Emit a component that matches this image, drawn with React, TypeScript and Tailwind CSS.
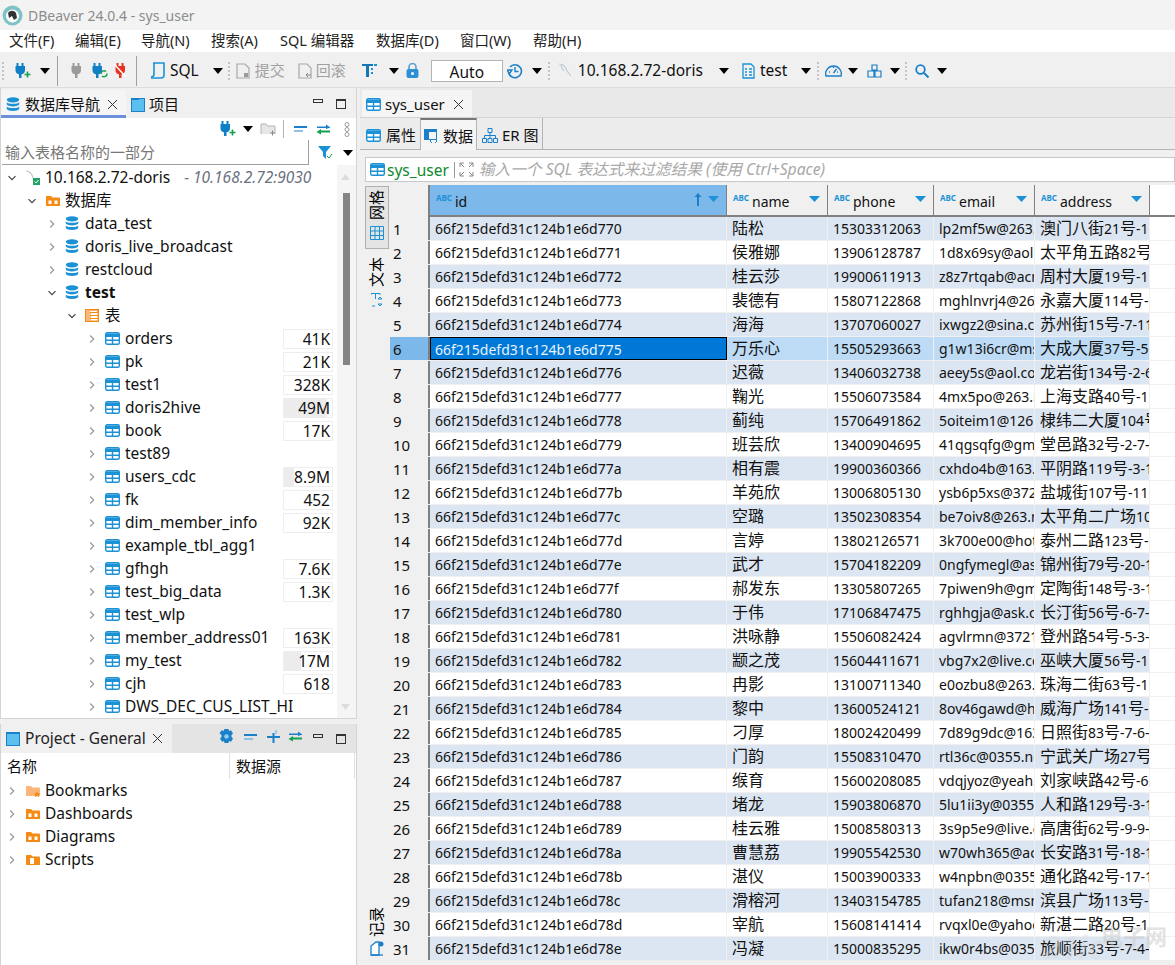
import React from "react";

const rows: string[][] = [
  ["陆松", "15303312063", "lp2mf5w@263.net", "澳门八街21号-1-11"],
  ["侯雅娜", "13906128787", "1d8x69sy@aol.com", "太平角五路82号-1"],
  ["桂云莎", "19900611913", "z8z7rtqab@acm.org", "周村大厦19号-11-2"],
  ["裴德有", "15807122868", "mghlnvrj4@263.net", "永嘉大厦114号-1-5"],
  ["海海", "13707060027", "ixwgz2@sina.com", "苏州街15号-7-11"],
  ["万乐心", "15505293663", "g1w13i6cr@msn.com", "大成大厦37号-5-1"],
  ["迟薇", "13406032738", "aeey5s@aol.com", "龙岩街134号-2-6"],
  ["鞠光", "15506073584", "4mx5po@263.net", "上海支路40号-11-1"],
  ["蓟纯", "15706491862", "5oiteim1@126.com", "棣纬二大厦104号-1"],
  ["班芸欣", "13400904695", "41qgsqfg@gmail.com", "堂邑路32号-2-7-1"],
  ["相有震", "19900360366", "cxhdo4b@163.com", "平阴路119号-3-1"],
  ["羊苑欣", "13006805130", "ysb6p5xs@3721.net", "盐城街107号-11-1"],
  ["空璐", "13502308354", "be7oiv8@263.net", "太平角二广场101号"],
  ["言婷", "13802126571", "3k700e00@hotmail.com", "泰州二路123号-1-1"],
  ["武才", "15704182209", "0ngfymegl@ask.com", "锦州街79号-20-1"],
  ["郝发东", "13305807265", "7piwen9h@gmail.com", "定陶街148号-3-1"],
  ["于伟", "17106847475", "rghhgja@ask.com", "长汀街56号-6-7-1"],
  ["洪咏静", "15506082424", "agvlrmn@3721.net", "登州路54号-5-3-1"],
  ["颛之茂", "15604411671", "vbg7x2@live.com", "巫峡大厦56号-11-1"],
  ["冉影", "13100711340", "e0ozbu8@263.net", "珠海二街63号-11-1"],
  ["黎中", "13600524121", "8ov46gawd@hotmail.com", "威海广场141号-1-1"],
  ["刁厚", "18002420499", "7d89g9dc@163.com", "日照街83号-7-6-1"],
  ["门韵", "15508310470", "rtl36c@0355.net", "宁武关广场27号-1"],
  ["缑育", "15600208085", "vdqjyoz@yeah.net", "刘家峡路42号-6-1"],
  ["堵龙", "15903806870", "5lu1ii3y@0355.net", "人和路129号-3-1"],
  ["桂云雅", "15008580313", "3s9p5e9@live.com", "高唐街62号-9-9-1"],
  ["曹慧荔", "19905542530", "w70wh365@acm.org", "长安路31号-18-1"],
  ["湛仪", "15003900333", "w4npbn@0355.net", "通化路42号-17-1"],
  ["滑榕河", "13403154785", "tufan218@msn.com", "滨县广场113号-1-1"],
  ["宰航", "15608141414", "rvqxl0e@yahoo.com", "新湛二路20号-11-1"],
  ["冯凝", "15000835295", "ikw0r4bs@0355.net", "旅顺街33号-7-4-1"],
];

const hex = (i: number) => "66f215defd31c124b1e6d7" + (0x70 + i).toString(16);

const tables: [string, string, number][] = [
  ["orders", "41K", 0],
  ["pk", "21K", 0],
  ["test1", "328K", 0],
  ["doris2hive", "49M", 90],
  ["book", "17K", 0],
  ["test89", "", 0],
  ["users_cdc", "8.9M", 20],
  ["fk", "452", 0],
  ["dim_member_info", "92K", 0],
  ["example_tbl_agg1", "", 0],
  ["gfhgh", "7.6K", 0],
  ["test_big_data", "1.3K", 0],
  ["test_wlp", "", 0],
  ["member_address01", "163K", 0],
  ["my_test", "17M", 35],
  ["cjh", "618", 0],
  ["DWS_DEC_CUS_LIST_HI", "", 0],
];

const menus: [string, string][] = [
  ["文件(F)", "w-[66px]"],
  ["编辑(E)", "w-[66px]"],
  ["导航(N)", "w-[70px]"],
  ["搜索(A)", "w-[69px]"],
  ["SQL 编辑器", "w-[96px]"],
  ["数据库(D)", "w-[84px]"],
  ["窗口(W)", "w-[73px]"],
  ["帮助(H)", "w-[60px]"],
];

// chinese runs are a bit bigger than latin ones in the grid
function Mixed({ text }: { text: string }) {
  return (
    <>
      {text.split(/([\u4e00-\u9fff]+)/).map((part, i) =>
        i % 2 === 1 ? <span key={i} className="text-[16px]">{part}</span> : <span key={i}>{part}</span>
      )}
    </>
  );
}

function Caret({ className = "" }: { className?: string }) {
  return (
    <svg width="10" height="6" viewBox="0 0 10 6" className={"shrink-0 " + className}>
      <path d="M0 0h10L5 6z" fill="#000" />
    </svg>
  );
}

function Grip({ className = "" }: { className?: string }) {
  return <div className={"h-[18px] w-0 border-l-2 border-dotted border-[#c4c4c4] shrink-0 " + className} />;
}

function Sep({ className = "" }: { className?: string }) {
  return <div className={"h-[30px] w-px bg-[#a0a0a0] shrink-0 " + className} />;
}

function TableIcon({ className = "" }: { className?: string }) {
  return (
    <svg width="15" height="13" viewBox="0 0 15 13" className={"shrink-0 " + className}>
      <rect x="0.7" y="0.7" width="13.6" height="11.6" rx="1.5" fill="#fff" stroke="#1b91d6" strokeWidth="1.4" />
      <path d="M1 1.5h13v3.5H1z" fill="#1b91d6" />
      <path d="M1 8.2h13M7.5 5v7" stroke="#1b91d6" strokeWidth="1.4" />
    </svg>
  );
}

function DbIcon() {
  return (
    <svg width="14" height="15" viewBox="0 0 14 15" className="shrink-0">
      <ellipse cx="7" cy="2.8" rx="6.2" ry="2.6" fill="#1b91d6" />
      <path d="M.8 5.2c1 2 11.4 2 12.4 0v2.4c-1 2.4-11.4 2.4-12.4 0zM.8 9.6c1 2 11.4 2 12.4 0v2.4c-1 2.6-11.4 2.6-12.4 0z" fill="#1b91d6" />
    </svg>
  );
}

function Chevron({ open = false }: { open?: boolean }) {
  return (
    <svg width="8" height="8" viewBox="0 0 8 8" className="shrink-0">
      <path d={open ? "M0.5 2.2L4 5.7l3.5-3.5" : "M2.2 0.5L5.7 4 2.2 7.5"} fill="none" stroke={open ? "#444" : "#999"} strokeWidth="1.2" />
    </svg>
  );
}

function Plug({ color, plus, refresh, x }: { color: string; plus?: boolean; refresh?: boolean; x?: boolean }) {
  return (
    <svg width="17" height="16" viewBox="0 0 17 16" className="shrink-0">
      <path d="M2.500 0h2v3h3V0h2v3h1.500v4.500c0 2.500-2 3.500-3.500 3.800V15H5v-3.700c-1.500-.3-3.500-1.300-3.500-3.800V3h1z" fill={color} />
      {plus && <path d="M10.500 11.500h6M13.500 8.500v6" stroke="#12a150" strokeWidth="1.600" />}
      {refresh && <path d="M10 11a3 3 0 0 1 5-2.500M16 10.500a3 3 0 0 1-5 2.500" stroke="#12a150" strokeWidth="1.400" fill="none" />}
      {x && <path d="M0 1l12 13" stroke="#fff" strokeWidth="1.500" />}
    </svg>
  );
}

function SwapArrows() {
  return (
    <svg width="15" height="11" viewBox="0 0 15 11" className="shrink-0">
      <path d="M1 2.500h9V.500l4.500 3-4.500 1.500V4H1z" fill="#1b7fc9" />
      <path d="M14 6.500H5V5L.5 8 5 10.500V8.500h9z" fill="#12a150" />
    </svg>
  );
}

function MinMax() {
  return (
    <div className="flex items-center ml-auto shrink-0">
      <div className="w-[10px] h-[4px] border border-[#333] mb-[6px]" />
      <div className="w-[10px] h-[10px] border border-[#333] border-t-[2px] ml-[13px] mr-[10px]" />
    </div>
  );
}

function FolderIcon({ star, doc }: { star?: boolean; doc?: boolean }) {
  return (
    <svg width="16" height="14" viewBox="0 0 16 14" className="shrink-0">
      <path d="M1 2h5l1.500 1.500H14a1 1 0 0 1 1 1V12H1z" fill={star ? "#fbb67a" : "#f58a14"} />
      {!star && !doc && <path d="M3 6h4v4.500H3zM9 6h4v4.500H9z" fill="#fff" stroke="#f58a14" />}
      {doc && <path d="M5 5h4v6H5z" fill="#fff" />}
      {star && <path d="M12 7l1 2.200 2.400.2-1.800 1.500.6 2.300-2.200-1.200-2.200 1.200.6-2.300-1.800-1.500 2.400-.2z" fill="#f58a14" />}
    </svg>
  );
}

function TreeRow({ indent, open, icon, children, last }: { indent: string; open?: boolean; icon: React.ReactNode; children: React.ReactNode; last?: React.ReactNode }) {
  return (
    <div className={"flex items-center h-[23px] whitespace-nowrap " + indent}>
      <div className="w-[17px] shrink-0 flex">
        <Chevron open={open} />
      </div>
      <div className="w-[20px] shrink-0 flex">{icon}</div>
      {children}
      {last}
    </div>
  );
}

function Badge({ value, fill }: { value: string; fill: number }) {
  return (
    <div className="absolute right-[23px] w-[50px] h-[20px] border border-[#eeeeee] bg-white">
      <div className="absolute left-0 top-0 bottom-0 bg-[#ececec]" style={{ width: fill + "%" }} />
      <div className="relative text-right pr-[2px] leading-[18px]">{value}</div>
    </div>
  );
}

function VTab({ text, className = "" }: { text: string; className?: string }) {
  return <div className={"[writing-mode:vertical-rl] [text-orientation:sideways] rotate-180 leading-none text-[15px] text-black " + className}>{text}</div>;
}

function AbcIcon() {
  return <span className="text-[8px] leading-none font-bold text-[#1b91d6] mr-[3px] mb-[5px] shrink-0">ABC</span>;
}

function HeadCell({ name, w, active }: { name: string; w: string; active?: boolean }) {
  return (
    <div className={"relative flex items-center h-full pl-[6px] border-r border-[#808080] shrink-0 " + w + (active ? " bg-[#7db8ea]" : " bg-[#f0f0f0]")}>
      <AbcIcon />
      <span className="mt-[2px]">{name}</span>
      {active && (
        <svg width="8" height="13" viewBox="0 0 8 13" className="absolute right-[24px] top-[8px]">
          <path d="M4 0l3.500 4H5v9H3V4H.5z" fill="#1b7fc9" />
        </svg>
      )}
      <svg width="11" height="6" viewBox="0 0 11 6" className="absolute right-[7px] top-[11px]">
        <path d="M0 0h11L5.500 6z" fill="#1b91d6" />
      </svg>
    </div>
  );
}

function Cell({ w, children, selected, cur, odd }: { w: string; children: React.ReactNode; selected: boolean; cur?: boolean; odd: boolean }) {
  let bg = odd ? "bg-[#dce6f2]" : "bg-white";
  if (selected) bg = "bg-[#bddbf5]";
  if (cur) bg = "bg-[#0078d7] text-[#e8f3ff] border border-black";
  return <div className={"h-full overflow-hidden whitespace-nowrap border-r border-[#f0f0f0] leading-[23px] shrink-0 " + w + " " + bg + (cur ? " pl-[4px]" : " pl-[5px]")}>{children}</div>;
}

export default function App() {
  return (
    <div className="w-[1175px] h-[965px] overflow-hidden relative bg-[#f0f0f0] text-[15.5px] text-[#111] [font-family:'Noto_Sans','Noto_Sans_CJK_SC',sans-serif]">
      {/* title bar */}
      <div className="h-[30px] bg-[#f3f3f3] flex items-center pl-[2px] text-[#8c8c8c] text-[14px]">
        <svg width="21" height="21" viewBox="0 0 21 21" className="mr-[5px]">
          <circle cx="10.500" cy="10.500" r="10" fill="#7fc3c5" />
          <circle cx="10.500" cy="11" r="6.500" fill="#fff" />
          <path d="M6 8c2-3 6-3 8 0l1 5-3 2-2-4-3 2z" fill="#333" />
        </svg>
        DBeaver 24.0.4 - sys_user
      </div>
      {/* menu */}
      <div className="h-[22px] bg-white flex items-center text-[14.5px] text-[#222] pl-[9px]">
        {menus.map(([label, w]) => (
          <span key={label} className={"shrink-0 whitespace-nowrap " + w}>{label}</span>
        ))}
      </div>
      {/* toolbar */}
      <div className="h-[36px] flex items-center border-b border-[#dcdcdc] pt-[2px] text-[15px]">
        <Grip className="ml-[2px]" />
        <div className="ml-[10px]"><Plug color="#0f7fc6" plus /></div>
        <Caret className="ml-[9px]" />
        <Sep className="ml-[7px]" />
        <div className="ml-[12px]"><Plug color="#9a9a9a" /></div>
        <div className="ml-[4px]"><Plug color="#0f7fc6" refresh /></div>
        <div className="ml-[6px]"><Plug color="#e8321f" x /></div>
        <Sep className="ml-[5px]" />
        <svg width="16" height="17" viewBox="0 0 16 17" className="ml-[13px]">
          <path d="M3 1h11v12c0 2-1 3-3 3H1" fill="none" stroke="#1b91d6" strokeWidth="1.600" />
          <path d="M4 1v11c0 2-1 3-3 3" fill="none" stroke="#1b91d6" strokeWidth="1.600" />
        </svg>
        <span className="ml-[4px] text-[15.5px]">SQL</span>
        <Caret className="ml-[14px]" />
        <Grip className="ml-[5px]" />
        <svg width="14" height="16" viewBox="0 0 14 16" className="ml-[6px]">
          <path d="M1 1h8l4 4v10H1z" fill="none" stroke="#a8a8a8" strokeWidth="1.200" />
          <path d="M8 10h4v4H8z" fill="#9a9a9a" />
        </svg>
        <span className="ml-[5px] text-[#a0a0a0]">提交</span>
        <svg width="14" height="16" viewBox="0 0 14 16" className="ml-[13px]">
          <path d="M1 1h8l4 4v10H1z" fill="none" stroke="#a8a8a8" strokeWidth="1.200" />
          <path d="M8 12h5M10 10l-2 2 2 2" fill="none" stroke="#888" />
        </svg>
        <span className="ml-[4px] text-[#a0a0a0]">回滚</span>
        <svg width="16" height="15" viewBox="0 0 16 15" className="ml-[16px]">
          <path d="M0 1h11v2H7v11H4V3H0z" fill="#1677b8" />
          <path d="M12 1h3v2h-3zM9 5h2v2H9zM9 9h2v2H9z" fill="#1b91d6" />
        </svg>
        <Caret className="ml-[11px]" />
        <svg width="13" height="15" viewBox="0 0 13 15" className="ml-[7px]">
          <path d="M3 7V4a3.500 3.500 0 0 1 7 0v3" fill="none" stroke="#5a9fd4" strokeWidth="1.600" />
          <rect x="0.500" y="6" width="12" height="9" rx="2" fill="#2f8fd5" />
          <circle cx="6.500" cy="10.500" r="1.500" fill="#fff" />
        </svg>
        <div className="ml-[12px] w-[72px] h-[22px] bg-white border border-[#b4b4b4] text-center leading-[22px] text-[15.5px]">Auto</div>
        <svg width="16" height="16" viewBox="0 0 16 16" className="ml-[4px]">
          <path d="M3 4a6.500 6.500 0 1 1-1.500 5" fill="none" stroke="#1b7fc9" strokeWidth="1.600" />
          <path d="M0 7h5L2.500 10.500zM8 4v4.500h3.500" fill="none" stroke="#1b7fc9" strokeWidth="1.400" />
        </svg>
        <Caret className="ml-[9px]" />
        <Grip className="ml-[6px]" />
        <svg width="15" height="15" viewBox="0 0 15 15" className="ml-[8px]">
          <path d="M1 1c4 0 7 3 8 7l4 5M3 1c0 3 1 5 3 7" fill="none" stroke="#c2ccd4" strokeWidth="1.200" />
        </svg>
        <span className="ml-[5px] text-[15.5px]">10.168.2.72-doris</span>
        <Caret className="ml-[16px]" />
        <svg width="13" height="16" viewBox="0 0 13 16" className="ml-[13px]">
          <path d="M1 1h8l3 3v11H1z" fill="none" stroke="#1b91d6" strokeWidth="1.300" />
          <path d="M3 6h2M3 9h2M3 12h2M7 6h3M7 9h3M7 12h3" stroke="#1b91d6" strokeWidth="1.300" />
        </svg>
        <span className="ml-[5px] text-[15.5px]">test</span>
        <Caret className="ml-[14px]" />
        <Grip className="ml-[6px]" />
        <svg width="17" height="15" viewBox="0 0 17 15" className="ml-[6px]">
          <path d="M1 13a7.800 7.800 0 1 1 15 0z" fill="none" stroke="#1b7fc9" strokeWidth="1.400" />
          <path d="M8.500 10l3-4M4 9h1M12 9h1M8.500 4v1" stroke="#1b7fc9" strokeWidth="1.400" />
        </svg>
        <Caret className="ml-[6px]" />
        <svg width="15" height="14" viewBox="0 0 15 14" className="ml-[9px]">
          <path d="M5 1h5v5H5zM1 7h6v6H1zM8 7h6v6H8z" fill="none" stroke="#1b7fc9" strokeWidth="1.200" />
        </svg>
        <Caret className="ml-[8px]" />
        <Grip className="ml-[5px]" />
        <svg width="14" height="14" viewBox="0 0 14 14" className="ml-[8px]">
          <circle cx="5.500" cy="5.500" r="4.300" fill="none" stroke="#1b7fc9" strokeWidth="1.800" />
          <path d="M9 9l4.500 4.500" stroke="#1b7fc9" strokeWidth="2" />
        </svg>
        <Caret className="ml-[8px]" />
      </div>

      <div className="flex h-[877px]">
        {/* left column */}
        <div className="w-[357px] shrink-0 flex flex-col mr-[3px]">
          <div className="h-[631px] bg-white border border-t-0 border-[#d4d4d4] flex flex-col relative">
            <div className="h-[30px] flex bg-[#f0f0f0] items-stretch shrink-0 pt-[2px]">
              <div className="w-[125px] border-b-[3px] border-[#6c8fdb] flex items-center bg-[#f5f5f5] pl-[5px] pt-[3px]">
                <DbIcon />
                <span className="ml-[5px] text-[15px] whitespace-nowrap">数据库导航</span>
                <svg width="11" height="11" viewBox="0 0 11 11" className="ml-[7px] shrink-0"><path d="M1 1l9 9M10 1l-9 9" stroke="#333" /></svg>
              </div>
              <div className="flex items-center pl-[5px] pb-[2px] pt-[3px]">
                <svg width="14" height="14" viewBox="0 0 14 14">
                  <rect x="0.500" y="0.500" width="13" height="13" fill="#5cc0ee" stroke="#1b7fc9" />
                  <path d="M0 0h8v2H0z" fill="#1b7fc9" />
                </svg>
                <span className="ml-[4px] text-[15px]">项目</span>
              </div>
              <MinMax />
            </div>
            <div className="h-[22px] flex items-center shrink-0 pl-[218px]">
              <Plug color="#0f7fc6" plus />
              <Caret className="ml-[7px]" />
              <svg width="16" height="14" viewBox="0 0 16 14" className="ml-[7px]">
                <path d="M1 12V2h5l1.500 2H15v8" fill="#e6e6e6" stroke="#b4b4b4" />
                <path d="M10 11h5M12.500 8.500v5" stroke="#888" />
              </svg>
              <div className="w-px h-[18px] bg-[#b4b4b4] ml-[7px]" />
              <div className="ml-[10px] flex flex-col gap-[2px]">
                <div className="w-[13px] h-[2px] bg-[#1b7fc9]" />
                <div className="w-[9px] h-[2px] bg-[#8cc1e8]" />
              </div>
              <div className="ml-[9px]"><SwapArrows /></div>
              <svg width="6" height="15" viewBox="0 0 6 15" className="ml-[13px]">
                <circle cx="3" cy="2.500" r="2" fill="none" stroke="#999" />
                <circle cx="3" cy="7.500" r="2" fill="none" stroke="#999" />
                <circle cx="3" cy="12.500" r="2" fill="none" stroke="#999" />
              </svg>
            </div>
            <div className="h-[25px] flex items-center shrink-0">
              <div className="ml-[1px] w-[307px] h-[25px] bg-white border-b border-r border-[#a0a0a0] pl-[3px] text-[15px] leading-[24px] text-[#777]">输入表格名称的一部分</div>
              <svg width="15" height="14" viewBox="0 0 15 14" className="ml-[9px]">
                <path d="M0 0h13L8 6v7L5 10V6z" fill="#1b91d6" />
                <path d="M9 10l2 2 3-4" fill="none" stroke="#12a150" />
              </svg>
              <Caret className="ml-[10px]" />
            </div>
            <div className="flex-1 relative overflow-hidden">
              <div className="absolute right-0 top-0 bottom-0 w-[19px] bg-[#f5f5f5]">
                <svg width="9" height="6" viewBox="0 0 9 6" className="absolute left-[4px] top-[9px]"><path d="M0 6h9L4.500 0z" fill="#dcdcdc" /></svg>
                <div className="absolute left-[6px] top-[28px] w-[7px] h-[172px] bg-[#858585]" />
                <svg width="9" height="6" viewBox="0 0 9 6" className="absolute left-[4px] bottom-[8px]"><path d="M0 0h9L4.500 6z" fill="#dcdcdc" /></svg>
              </div>
              <div className="pt-[1px]">
                <TreeRow indent="pl-[7px]" open icon={
                  <svg width="16" height="16" viewBox="0 0 16 16">
                    <path d="M1 1c4 0 6 3 7 7l2 3" fill="none" stroke="#bcc7d0" strokeWidth="1.200" />
                    <rect x="8" y="8" width="7" height="7" fill="#21a366" />
                    <path d="M9.500 11.500l1.500 1.500 2.500-3" fill="none" stroke="#fff" />
                  </svg>
                }>
                  <span>10.168.2.72-doris</span>
                  <span className="ml-[14px] italic text-[#6b7280]">- 10.168.2.72:9030</span>
                </TreeRow>
                <TreeRow indent="pl-[27px]" open icon={<FolderIcon />}><span>数据库</span></TreeRow>
                {["data_test", "doris_live_broadcast", "restcloud"].map((d) => (
                  <TreeRow key={d} indent="pl-[47px]" icon={<DbIcon />}><span>{d}</span></TreeRow>
                ))}
                <TreeRow indent="pl-[47px]" open icon={<DbIcon />}><span className="font-bold">test</span></TreeRow>
                <TreeRow indent="pl-[67px]" open icon={
                  <svg width="14" height="13" viewBox="0 0 14 13">
                    <rect x="0.700" y="0.700" width="12.600" height="11.600" fill="#fff" stroke="#f58a14" strokeWidth="1.400" />
                    <path d="M1 1h12v2.500H1zM5 3v9M5 6.500h8M5 9.500h8" stroke="#f58a14" fill="none" />
                    <path d="M1 1h4v11H1z" fill="#fbb67a" />
                  </svg>
                }><span>表</span></TreeRow>
                {tables.map(([n, v, fill]) => (
                  <TreeRow key={n} indent="pl-[87px] relative" icon={<TableIcon />}
                    last={v ? <Badge value={v} fill={fill} /> : null}>
                    <span>{n}</span>
                  </TreeRow>
                ))}
              </div>
            </div>
          </div>
          <div className="h-[5px] shrink-0" />
          <div className="flex-1 bg-white border-x border-[#d4d4d4] flex flex-col">
            <div className="h-[29px] flex bg-[#e4e4e4] items-stretch shrink-0">
              <div className="w-[171px] bg-[#f0f0f0] flex items-center pl-[5px]">
                <svg width="14" height="14" viewBox="0 0 14 14" className="shrink-0">
                  <rect x="0.500" y="0.500" width="13" height="13" fill="#5cc0ee" stroke="#1b7fc9" />
                  <path d="M0 0h14v2H0z" fill="#1b7fc9" />
                </svg>
                <span className="ml-[5px] text-[15.5px] text-[#222] whitespace-nowrap">Project - General</span>
                <svg width="11" height="11" viewBox="0 0 11 11" className="ml-[6px] shrink-0"><path d="M1 1l9 9M10 1l-9 9" stroke="#333" /></svg>
              </div>
              <div className="flex items-center pl-[47px] pb-[4px] gap-[10px]">
                <svg width="15" height="15" viewBox="0 0 15 15">
                  <path d="M5.500 0h4l.5 2 2-.800 2 3.300-1.500 1.400v2.200l1.500 1.400-2 3.300-2-.800-.5 2h-4l-.5-2-2 .800-2-3.300 1.500-1.400V6L.500 4.500l2-3.300 2 .800z" fill="#1b7fc9" />
                  <circle cx="7.500" cy="7.500" r="2.300" fill="#8fcdf2" />
                </svg>
                <div className="flex flex-col gap-[2px]">
                  <div className="w-[13px] h-[2px] bg-[#1b7fc9]" />
                  <div className="w-[9px] h-[2px] bg-[#8cc1e8]" />
                </div>
                <svg width="13" height="13" viewBox="0 0 13 13">
                  <path d="M0 7h13M6.500 3v10" stroke="#1b7fc9" strokeWidth="2" />
                  <path d="M9 0v4" stroke="#8cc1e8" strokeWidth="1.500" />
                </svg>
                <div className="-ml-[2px]"><SwapArrows /></div>
              </div>
              <MinMax />
            </div>
            <div className="h-[26px] flex items-center shrink-0 text-[15px]">
              <div className="w-[229px] pl-[6px] border-r border-[#e0e0e0] h-full leading-[26px]">名称</div>
              <div className="flex-1 pl-[6px] border-r border-[#e0e0e0] h-full leading-[26px] mr-[1px]">数据源</div>
            </div>
            <div>
              {[
                { n: "Bookmarks", i: <FolderIcon star /> },
                { n: "Dashboards", i: <FolderIcon /> },
                { n: "Diagrams", i: <FolderIcon /> },
                { n: "Scripts", i: <FolderIcon doc /> },
              ].map((r) => (
                <TreeRow key={r.n} indent="pl-[7px]" icon={r.i}><span>{r.n}</span></TreeRow>
              ))}
            </div>
          </div>
        </div>

        {/* right column */}
        <div className="flex-1 flex flex-col min-w-0">
          <div className="h-[30px] flex shrink-0 bg-[#e9e9e9] pt-[2px] border-b border-[#d4d4d4]">
            <div className="ml-[2px] w-[110px] bg-[#f5f5f5] flex items-center pl-[4px] pt-[2px]">
              <TableIcon />
              <span className="ml-[4px] text-[15px]">sys_user</span>
              <svg width="11" height="11" viewBox="0 0 11 11" className="ml-[8px]"><path d="M1 1l9 9M10 1l-9 9" stroke="#333" /></svg>
            </div>
          </div>
          <div className="h-[32px] flex shrink-0 border-b border-[#b4b4b4] bg-[#ececec]">
            <div className="ml-[6px] w-[54px] flex items-center pt-[4px]">
              <TableIcon />
              <span className="ml-[5px] text-[15px]">属性</span>
            </div>
            <div className="w-[57px] bg-[#f5f5f5] border-x border-[#b4b4b4] border-t-2 border-t-[#777] flex items-center pl-[3px] -mb-px pt-[2px]">
              <svg width="14" height="14" viewBox="0 0 14 14" className="shrink-0">
                <rect x="0.500" y="0.500" width="12" height="10" fill="none" stroke="#1b7fc9" />
                <path d="M0 0h13v3H0zM0 3h5v8H0z" fill="#1b7fc9" />
                <path d="M8 10l-2 2 2 2M11 10l2 2-2 2" fill="none" stroke="#1b7fc9" />
              </svg>
              <span className="ml-[5px] text-[15px] whitespace-nowrap">数据</span>
            </div>
            <div className="w-[66px] border-r border-[#b4b4b4] flex items-center pl-[5px] pt-[4px]">
              <svg width="16" height="15" viewBox="0 0 16 15" className="shrink-0">
                <path d="M6 .500h4v4H6zM.500 10.500h4v4h-4zM6 10.500h4v4H6zM11.500 10.500h4v4h-4zM8 4.500v6M2.500 10.500V7.500h11v3" fill="none" stroke="#1b7fc9" />
              </svg>
              <span className="ml-[4px] text-[15px] whitespace-nowrap">ER 图</span>
            </div>
          </div>
          <div className="h-[7px] shrink-0" />
          <div className="h-[25px] ml-[5px] bg-white border border-[#c8c8c8] flex items-center shrink-0 whitespace-nowrap">
            <div className="ml-[4px]"><TableIcon /></div>
            <span className="ml-[2px] text-[#0f8a2c] text-[15.5px] leading-none mr-[5px] mt-[2px]">sys_user</span>
            <div className="w-px h-[16px] bg-[#999]" />
            <svg width="15" height="15" viewBox="0 0 15 15" className="ml-[4px] shrink-0">
              <path d="M1 1l4 4M1 1h4M1 1v4M14 1l-4 4M14 1h-4M14 1v4M1 14l4-4M1 14h4M1 14v-4M14 14l-4-4M14 14h-4M14 14v-4" stroke="#888" fill="none" />
            </svg>
            <span className="ml-[5px] italic text-[#a8a8a8] text-[15.7px] mt-[1px]">输入一个 SQL 表达式来过滤结果 (使用 Ctrl+Space)</span>
          </div>
          <div className="h-[3px] shrink-0" />
          <div className="flex-1 flex min-h-0 relative">
            {/* side tabs */}
            <div className="w-[30px] shrink-0 flex flex-col items-center relative">
              <div className="ml-[3px] mt-[1px] w-[24px] h-[63px] bg-[#e4e4e4] border border-[#b0b0b0] flex flex-col items-center pt-[3px]">
                <VTab text="网格" />
                <svg width="14" height="14" viewBox="0 0 14 14" className="mt-[6px]">
                  <path d="M.500.500h13v13H.500zM.500 5h13M.500 9.500h13M5 .500v13M9.500.500v13" fill="none" stroke="#1b91d6" />
                </svg>
              </div>
              <VTab text="文本" className="ml-[3px] mt-[8px]" />
              <svg width="12" height="14" viewBox="0 0 12 14" className="ml-[3px] mt-[6px]">
                <path d="M0 2V.500h9V2M4.500.500V6M1 13h3M9 4l-2 2h4zM9 13l-2-2h4z" fill="none" stroke="#1b91d6" />
              </svg>
              <div className="mt-auto ml-[3px] flex flex-col items-center mb-[9px]">
                <VTab text="记录" />
                <svg width="14" height="15" viewBox="0 0 14 15" className="mt-[4px]">
                  <path d="M1 14V5l5-4h3v13z" fill="#fff" stroke="#1b7fc9" strokeWidth="1.300" />
                  <path d="M13 14H1" stroke="#1b7fc9" strokeWidth="1.300" />
                  <circle cx="11" cy="3" r="2.500" fill="#1b7fc9" />
                </svg>
              </div>
            </div>
            {/* grid */}
            <div className="flex-1 bg-white flex flex-col min-w-0 text-[14px] mb-[5px] overflow-hidden">
              <div className="flex h-[32px] shrink-0 border-b-2 border-[#808080]">
                <div className="w-[40px] bg-[#f0f0f0] border-r-2 border-[#808080] shrink-0 -mb-[2px]" />
                <HeadCell name="id" w="w-[297px]" active />
                <HeadCell name="name" w="w-[101px]" />
                <HeadCell name="phone" w="w-[106px]" />
                <HeadCell name="email" w="w-[101px]" />
                <HeadCell name="address" w="w-[115px]" />
              </div>
              {rows.map((r, i) => {
                const odd = i % 2 === 0;
                const sel = i === 5;
                return (
                  <div key={i} className="flex h-[24px] shrink-0 border-b border-[#f0f0f0]">
                    <div className={"w-[40px] shrink-0 border-r-2 border-[#808080] pl-[3px] text-[15px] leading-[24px] " + (sel ? "bg-[#7db8ea]" : "bg-[#f0f0f0]")}>{i + 1}</div>
                    <Cell w="w-[297px]" selected={sel} cur={sel} odd={odd}>{hex(i)}</Cell>
                    <Cell w="w-[101px]" selected={sel} odd={odd}><Mixed text={r[0]} /></Cell>
                    <Cell w="w-[106px]" selected={sel} odd={odd}>{r[1]}</Cell>
                    <Cell w="w-[101px]" selected={sel} odd={odd}>{r[2]}</Cell>
                    <Cell w="w-[115px]" selected={sel} odd={odd}><Mixed text={r[3]} /></Cell>
                  </div>
                );
              })}
            </div>
          </div>
        </div>
      </div>
      {/* site watermark over the corner of the grid */}
      <div className="absolute right-[8px] bottom-[18px] text-[22px] leading-none font-bold text-[#c8c8c8]/50 pointer-events-none">电子网</div>
      <div className="absolute right-[72px] bottom-[2px] text-[32px] leading-none italic font-bold text-[#d8d8d8]/40 pointer-events-none">21ic</div>
    </div>
  );
}
